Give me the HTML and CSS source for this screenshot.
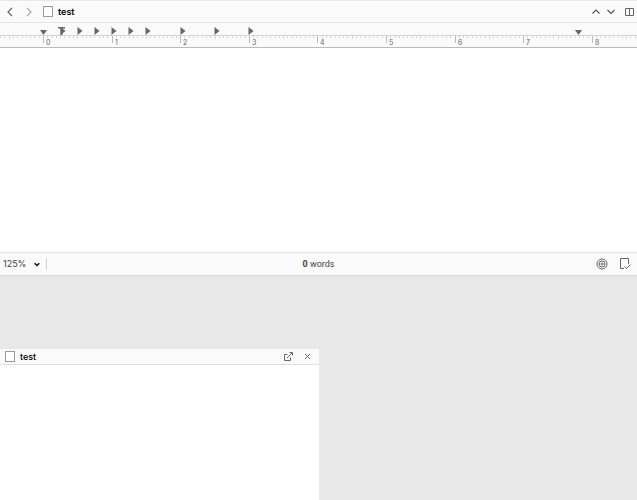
FILE: index.html
```html
<!DOCTYPE html>
<html lang="en">

<head>
    <meta charset="UTF-8">
    <meta name="viewport" content="width=device-width, initial-scale=1.0">
    <title>test</title>
    <link rel="stylesheet" href="styles.css">
</head>

<body>
    <main class="editor">
        <header class="editor-header">
            <button type="button" class="icon-btn" aria-label="Back">
                <svg width="8" height="10" viewBox="0 0 8 10"><path d="M6 1L2 5l4 4" /></svg>
            </button>
            <button type="button" class="icon-btn forward" aria-label="Forward">
                <svg width="8" height="10" viewBox="0 0 8 10"><path d="M2 1l4 4-4 4" /></svg>
            </button>
            <svg class="doc-icon" width="10" height="11" viewBox="0 0 10 11"><rect x=".5" y=".5" width="9" height="10" /></svg>
            <h1 class="doc-title">test</h1>
            <div class="header-tools">
                <button type="button" class="icon-btn" aria-label="Previous document">
                    <svg width="10" height="8" viewBox="0 0 10 8"><path d="M1.500 5.500L5 2l3.500 3.500" /></svg>
                </button>
                <button type="button" class="icon-btn" aria-label="Next document">
                    <svg width="10" height="8" viewBox="0 0 10 8"><path d="M1.500 2L5 5.500 8.500 2" /></svg>
                </button>
                <button type="button" class="icon-btn split" aria-label="Split editor">
                    <svg width="9" height="8" viewBox="0 0 9 8"><path d="M.5.5h8v7h-8zM4.500.5v7" /></svg>
                </button>
            </div>
        </header>

        <!-- Ruler marks are drawn by ruler.js -->
        <div class="ruler">
            <svg id="ruler" width="100%" height="24"></svg>
        </div>

        <div class="page" contenteditable="true" role="textbox" aria-label="Document text"></div>

        <footer class="editor-footer">
            <div class="footer-side">
                <label class="zoom">
                    <select aria-label="Zoom">
                        <option>100%</option>
                        <option selected>125%</option>
                        <option>150%</option>
                    </select>
                    <svg width="6" height="5" viewBox="0 0 6 5"><path d="M.7 1.200L3 3.500l2.300-2.300" /></svg>
                </label>
            </div>
            <p class="word-count"><b>0</b> words</p>
            <div class="footer-side footer-tools">
                <button type="button" class="icon-btn" aria-label="Targets">
                    <svg width="12" height="12" viewBox="0 0 12 12"><circle cx="6" cy="6" r="5" /><circle cx="6" cy="6" r="3" /><circle cx="6" cy="6" r="1" /></svg>
                </button>
                <button type="button" class="icon-btn" aria-label="Document status">
                    <svg width="12" height="12" viewBox="0 0 12 12"><path d="M9.500 6V.5h-8v10h3.500M5.500 8.500L7.500 10.500l4-4" /></svg>
                </button>
            </div>
        </footer>
    </main>

    <div class="workspace">
        <section class="copyholder">
            <header class="copyholder-header">
                <svg class="doc-icon" width="10" height="11" viewBox="0 0 10 11"><rect x=".5" y=".5" width="9" height="10" /></svg>
                <h2 class="doc-title">test</h2>
                <button type="button" class="icon-btn" aria-label="Open in window">
                    <svg width="9" height="9" viewBox="0 0 9 9"><path d="M3.500 2.500h-3v6h6V5.500M3 6L8 1M5.500.5h3v3" /></svg>
                </button>
                <button type="button" class="icon-btn" aria-label="Close">
                    <svg width="7" height="7" viewBox="0 0 7 7"><path d="M1 1l5 5M6 1L1 6" /></svg>
                </button>
            </header>
            <div class="copyholder-page"></div>
        </section>
    </div>

    <script src="ruler.js"></script>
</body>

</html>
```

FILE: styles.css
```css
* {
    box-sizing: border-box;
}

body {
    display: flex;
    flex-direction: column;
    min-height: 100vh;
    margin: 0;
    background: #e8e8e8;
    color: #444;
    font-family: Inter, "Liberation Sans", sans-serif;
    font-size: 9px;
    line-height: 12px;
}

svg {
    display: block;
    fill: none;
    stroke: #666;
}

.editor-header {
    display: flex;
    align-items: center;
    height: 23px;
    padding: 0 3px 0 5px;
    background: #fafafa;
    border-top: 1px solid #e8e8e8;
    border-bottom: 1px solid #e4e4e4;
}

.icon-btn {
    display: flex;
    align-items: center;
    justify-content: center;
    padding: 0;
    border: 0;
    background: none;
}

.editor-header > .icon-btn {
    width: 10px;
    margin-right: 9px;
}

.editor-header > .icon-btn svg,
.header-tools svg {
    stroke-width: 1.2;
}

.header-tools svg {
    stroke: #555;
}

.forward svg {
    stroke: #aaa;
}

.header-tools .split svg {
    stroke: #666;
    stroke-width: 1;
}

.doc-icon {
    flex: none;
    fill: #fff;
    stroke: #999;
}

.doc-title {
    margin: 0 0 0 5px;
    color: #000;
    font-size: 9px;
    font-weight: 600;
}

.header-tools {
    display: flex;
    align-items: center;
    gap: 5px;
    margin-left: auto;
}

.header-tools .split {
    margin-left: 4px;
}

.ruler {
    height: 25px;
    background: #fafafa;
    border-bottom: 1px solid #bbb;
    overflow: hidden;
}

.ruler .baseline,
.ruler .tick {
    stroke: #d4d4d4;
}

.ruler .inch {
    stroke: #bbb;
}

.ruler .marker {
    fill: #666;
    stroke: none;
}

.ruler text {
    fill: #666;
    stroke: none;
    font-size: 7px;
}

.page {
    min-height: 204px;
    padding: 8px 44px;
    background: #fff;
    outline: none;
}

.editor-footer {
    display: grid;
    grid-template-columns: 1fr auto 1fr;
    align-items: center;
    height: 24px;
    background: #fafafa;
    border-top: 1px solid #e4e4e4;
    border-bottom: 1px solid #d8d8d8;
}

.footer-side {
    display: flex;
}

.zoom {
    position: relative;
    width: 47px;
    border-right: 1px solid #d0d0d0;
}

.zoom select {
    display: block;
    width: 100%;
    height: 12px;
    padding: 0 0 0 3px;
    border: 0;
    background: none;
    color: #444;
    font: inherit;
    appearance: none;
}

.zoom svg {
    position: absolute;
    top: 4px;
    right: 6px;
    stroke: #111;
    stroke-width: 1.5;
    pointer-events: none;
}

.word-count {
    margin: 0;
    font-family: Roboto, "Liberation Sans", sans-serif;
}

.footer-tools {
    justify-content: flex-end;
    gap: 11px;
    padding-right: 6px;
}

.workspace {
    flex: 1;
    display: flex;
    padding-top: 73px;
}

.copyholder {
    display: flex;
    flex-direction: column;
    width: 50%;
    background: #fff;
}

.copyholder-header {
    display: flex;
    align-items: center;
    height: 16px;
    padding: 0 8px 0 5px;
    background: #fafafa;
    border-bottom: 1px solid #e0e0e0;
}

.copyholder-header .doc-title {
    flex: 1;
    font-weight: 500;
}

.copyholder-header .icon-btn + .icon-btn {
    margin-left: 11px;
}

.copyholder-page {
    flex: 1;
}
```

FILE: ruler.js
```js
const ruler = document.getElementById('ruler');

const ORIGIN = 43;
const INCH = 68.6;
const DIVISIONS = 16;
const BASE_Y = 12;

const tabStops = [0.27, 0.52, 0.77, 1.02, 1.27, 1.52, 2.02, 2.52, 3.02];

function add(name, attrs, text) {
    const el = document.createElementNS('http://www.w3.org/2000/svg', name);
    for (const key in attrs) {
        el.setAttribute(key, attrs[key]);
    }
    if (text !== undefined) {
        el.textContent = text;
    }
    ruler.appendChild(el);
}

function toX(inches) {
    return Math.round(ORIGIN + inches * INCH);
}

function drawRuler() {
    const width = ruler.clientWidth || window.innerWidth;
    ruler.replaceChildren();

    add('path', { class: 'baseline', d: `M0 ${BASE_Y + 0.5}H${width}` });

    for (let i = -DIVISIONS; toX(i / DIVISIONS) < width; i++) {
        const x = toX(i / DIVISIONS);
        const isInch = i % DIVISIONS === 0;
        let length = 2;
        if (isInch) {
            length = 7;
        } else if (i % (DIVISIONS / 2) === 0) {
            length = 3;
        }
        add('path', { class: isInch ? 'tick inch' : 'tick', d: `M${x + 0.5} ${BASE_Y + 1}v${length}` });
        if (i >= 0 && isInch && x + 10 < width) {
            add('text', { x: x + 3, y: 22 }, i / DIVISIONS);
        }
    }

    // Tab stops
    tabStops.forEach((stop) => {
        add('path', { class: 'marker', d: `M${toX(stop) - 1.5} 4l5 4-5 4z` });
    });

    // First line indent
    add('path', { class: 'marker', d: `M${toX(0.27) - 4} 4h7v1.500h-2.500v6.500h-2v-6.500h-2.500z` });

    // Left and right margins
    [0, 7.8].forEach((margin) => {
        add('path', { class: 'marker', d: `M${toX(margin) - 3} 7h7l-3.500 5z` });
    });
}

drawRuler();
window.addEventListener('resize', drawRuler);
```
